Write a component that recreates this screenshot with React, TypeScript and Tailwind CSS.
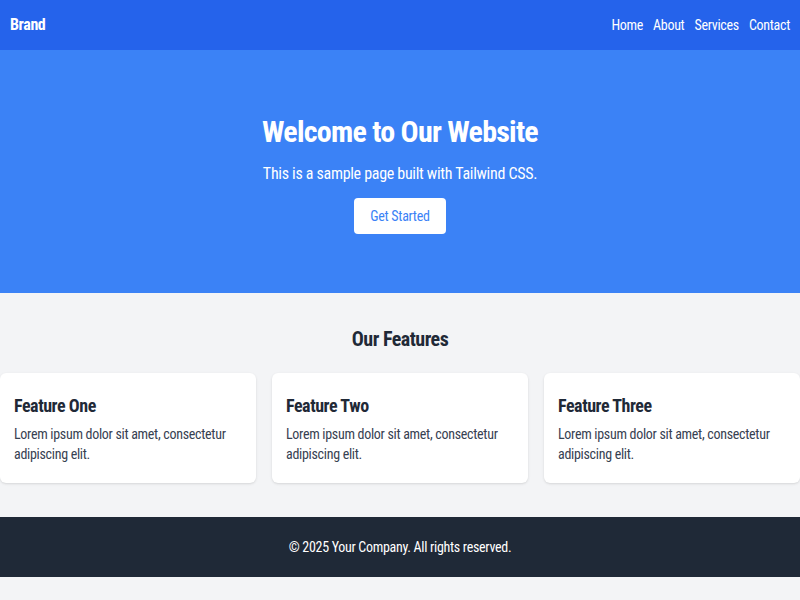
export default function App() {
  const features = [
    { title: "Feature One", text: "Lorem ipsum dolor sit amet, consectetur adipiscing elit." },
    { title: "Feature Two", text: "Lorem ipsum dolor sit amet, consectetur adipiscing elit." },
    { title: "Feature Three", text: "Lorem ipsum dolor sit amet, consectetur adipiscing elit." },
  ];

  return (
    <div className="min-h-screen bg-[#f3f4f6] text-[#1f2937] font-['Roboto',sans-serif] font-stretch-[80%] tracking-[-0.3px]">
      {/* Navbar */}
      <nav className="bg-[#2563eb] text-white h-[50px] px-[10px] flex items-center justify-between">
        <div className="text-base font-bold tracking-tight">Brand</div>
        <div className="flex gap-[10px] text-sm">
          <a href="#">Home</a>
          <a href="#">About</a>
          <a href="#">Services</a>
          <a href="#">Contact</a>
        </div>
      </nav>

      {/* Hero */}
      <section className="bg-[#3b82f6] text-white h-[243px] pt-16 flex flex-col items-center">
        <h1 className="text-3xl font-bold tracking-tight mb-3">Welcome to Our Website</h1>
        <p className="text-base mb-3">This is a sample page built with Tailwind CSS.</p>
        <button className="bg-white text-[#3b82f6] px-4 py-2 rounded text-sm">Get Started</button>
      </section>

      {/* Features */}
      <section className="pt-8 pb-[34px]">
        <h2 className="text-xl font-bold tracking-tight text-center mb-5">Our Features</h2>
        <div className="grid grid-cols-3 gap-4">
          {features.map((f) => (
            <div key={f.title} className="bg-white rounded-md shadow px-[14px] py-[19px]">
              <h3 className="text-lg font-bold tracking-tight mb-1">{f.title}</h3>
              <p className="text-[#374151] text-sm">{f.text}</p>
            </div>
          ))}
        </div>
      </section>

      {/* Footer */}
      <footer className="bg-[#1f2937] text-white h-[60px] flex items-center justify-center">
        <p className="text-sm">&copy; 2025 Your Company. All rights reserved.</p>
      </footer>
    </div>
  );
}
